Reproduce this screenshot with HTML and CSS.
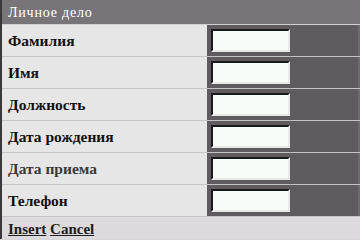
FILE: index.html
```
<!DOCTYPE html>
<html>
<head>
<meta charset="utf-8">
<link rel="stylesheet" href="styles.css">
</head>
<body>
<div class="card">
  <div class="head">Личное дело</div>
  <div class="row"><div class="label">Фамилия</div><div class="field"><input class="inp" type="text"></div></div>
  <div class="row"><div class="label">Имя</div><div class="field"><input class="inp" type="text"></div></div>
  <div class="row"><div class="label">Должность</div><div class="field"><input class="inp" type="text"></div></div>
  <div class="row"><div class="label">Дата рождения</div><div class="field"><input class="inp" type="text"></div></div>
  <div class="row"><div class="label thin">Дата приема</div><div class="field"><input class="inp" type="text"></div></div>
  <div class="row"><div class="label">Телефон</div><div class="field"><input class="inp" type="text"></div></div>
  <div class="foot"><a href="#" class="lnk">Insert</a> <a href="#" class="lnk">Cancel</a></div>
</div>
</body>
</html>
```
FILE: styles.css
```
html, body { margin: 0; padding: 0; background: #d8d6d8; }
body { width: 360px; height: 239px; overflow: hidden; font-family: "Liberation Serif", "DejaVu Serif", serif; }
.card { border-left: 2px solid #3a383a; border-bottom: 2px solid #9a989a; width: 358px; }
.head { height: 24px; background: #787578; color: #ffffff; font-size: 14px; letter-spacing: 0.8px; line-height: 25px; padding-left: 6px; border-bottom: 1px solid #d0d0d0; }
.row { display: flex; height: 31px; border-bottom: 1px solid #c4c4c4; }
.label { width: 199px; background: #e6e6e6; font-weight: bold; font-size: 15.5px; line-height: 31px; padding-left: 6px; color: #111; }
.label.thin { color: #3a3a3a; }
.field { flex: 1; background: #5f5c5f; display: flex; align-items: center; padding-left: 4px; border-right: 2px solid #6e6b6e; }
.inp { box-sizing: border-box; width: 79px; height: 23px; margin: 0; padding: 0; background: #f8fcf8; border: 2px solid; border-color: #1a1a1a #e8e8e8 #e8e8e8 #1a1a1a; }
.foot { height: 24px; background: #dcdadc; line-height: 24px; padding-left: 6px; font-size: 15px; font-weight: bold; }
.lnk { color: #1c1c1c; text-decoration: underline; }
```
